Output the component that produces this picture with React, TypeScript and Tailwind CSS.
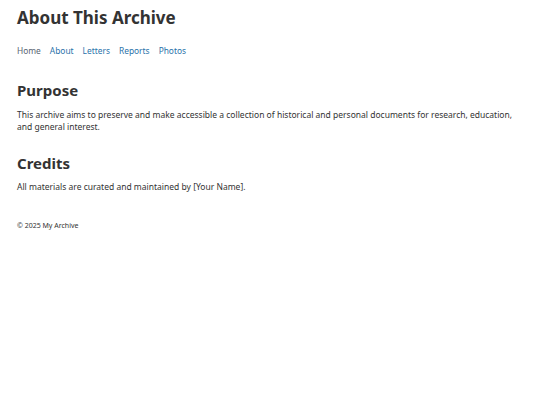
export default function App() {
  const links = ['Home', 'About', 'Letters', 'Reports', 'Photos'];

  return (
    <div className="min-h-screen bg-white px-[17px] text-[#333] [font-family:'Noto_Sans','Open_Sans',sans-serif]">
      {/* Header */}
      <header className="pt-[6px]">
        <h1 className="text-[17px] leading-[24px] font-bold text-[#333]">About This Archive</h1>
        <nav className="mt-[15px] flex gap-[9px] text-[8.4px] leading-[12px]">
          {links.map((link, i) => (
            <a
              key={link}
              href="#"
              className={i === 0 ? 'text-[#596472]' : 'text-[#2a72aa]'}
            >
              {link}
            </a>
          ))}
        </nav>
      </header>

      {/* Main Content */}
      <main className="mt-[23px]">
        <section>
          <h2 className="text-[15px] leading-[20px] font-bold">Purpose</h2>
          <p className="mt-[9px] text-[8.5px] leading-[12px]">
            This archive aims to preserve and make accessible a collection of historical and personal documents for research, education, and general interest.
          </p>
        </section>
        <section className="mt-[20px]">
          <h2 className="text-[15px] leading-[20px] font-bold">Credits</h2>
          <p className="mt-[8px] text-[8.5px] leading-[12px]">
            All materials are curated and maintained by [Your Name].
          </p>
        </section>
      </main>

      <footer className="mt-[28px] text-[7px] leading-[10px]">© 2025 My Archive</footer>
    </div>
  );
}
